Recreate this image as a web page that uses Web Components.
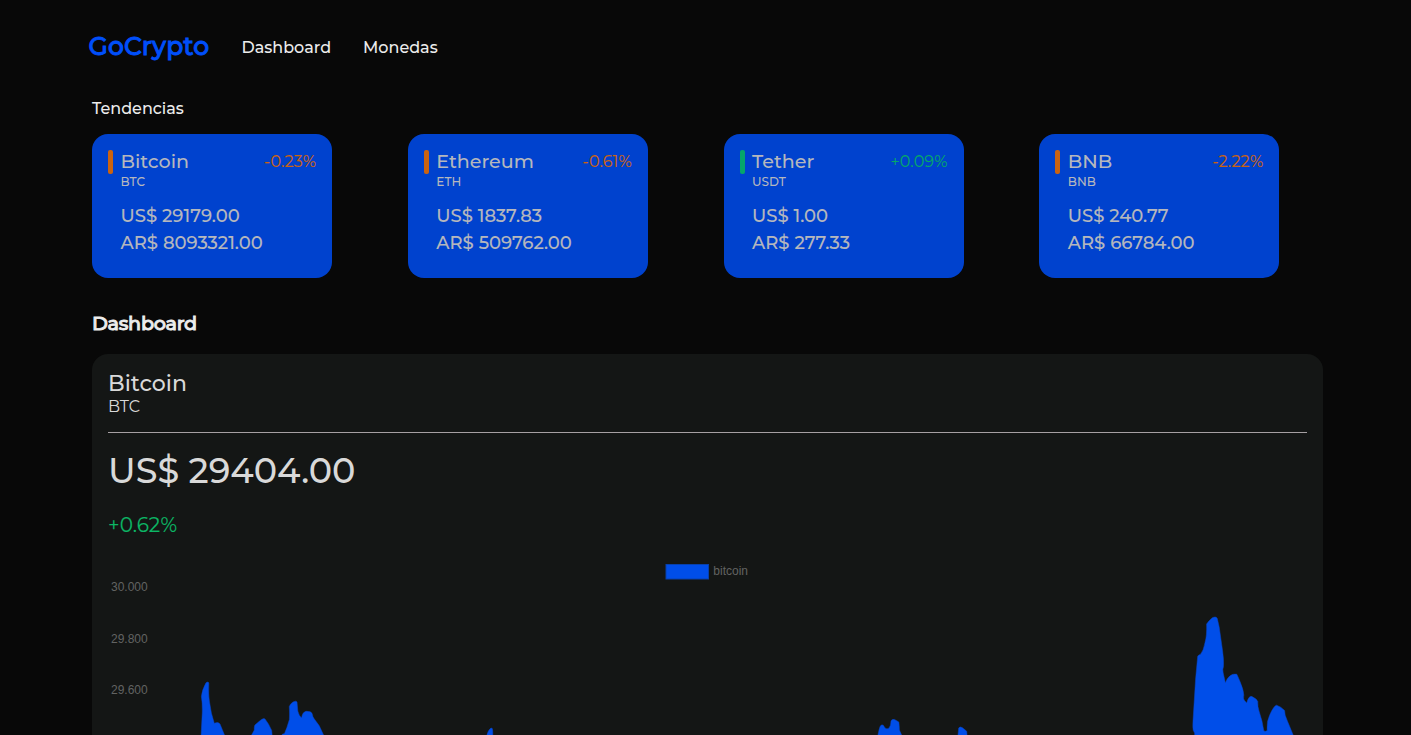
<!DOCTYPE html>
<html lang="es">
<head>
<meta charset="utf-8">
<title>GoCrypto</title>
<style>
html,body{margin:0;background:#080808;overflow:hidden;height:735px}
</style>
</head>
<body>
<go-app></go-app>
<script>
const define = (name, html, setup) => {
  const tpl = document.createElement('template');
  tpl.innerHTML = html;
  customElements.define(name, class extends HTMLElement {
    connectedCallback() {
      if (this.shadowRoot) return;
      this.attachShadow({ mode: 'open' }).append(tpl.content.cloneNode(true));
      if (setup) setup(this, this.shadowRoot);
    }
  });
};

define('text-line', `<style>:host{display:block;white-space:nowrap}</style><slot></slot>`);

define('go-nav', `<style>
:host{display:flex;align-items:center;gap:32px;height:94px;padding-left:88.6px;box-sizing:border-box}
text-line{font-size:16px;font-weight:500;line-height:20px;color:#ececec;margin-top:2px}
.logo{font-size:25px;line-height:32px;color:#004ffb;-webkit-text-stroke:.9px #004ffb;letter-spacing:.08px;margin:-3px .3px 0 0}
</style>
<text-line class="logo">GoCrypto</text-line>
<text-line>Dashboard</text-line>
<text-line>Monedas</text-line>`);

define('coin-card', `<style>
:host{display:flex;align-items:flex-start;box-sizing:border-box;width:240px;height:144px;padding:16px;border-radius:16px;background:#0042ce;color:#b5b7bd;--tone:#cb6310}
:host([up]){--tone:#05a66b}
.bar{width:5px;height:24px;border-radius:2px;background:var(--tone);margin-right:7.6px;flex:none}
.body{flex:1}
.top{display:flex;justify-content:space-between;height:22px}
.name{font-size:19.1px;font-weight:500;line-height:24px}
.pct{font-size:16px;line-height:24px;color:var(--tone);-webkit-text-stroke:.15px var(--tone);letter-spacing:.08px}
.sym{font-size:12px;font-weight:500;line-height:16px;margin:2px 0 13px}
.price{font-size:18px;font-weight:500;line-height:27px;-webkit-text-stroke:.1px #b5b7bd}
</style>
<div class="bar"></div><div class="body"></div>`, (host, root) => {
  const line = c => `<text-line class="${c === 'usd' || c === 'ars' ? 'price' : c}">${host.getAttribute(c)}</text-line>`;
  root.querySelector('.body').innerHTML =
    `<div class="top">${line('name')}${line('pct')}</div>` + line('sym') + line('usd') + line('ars');
});

define('price-chart', `<style>
:host{display:block;height:199px}
svg{display:block;width:1199px;height:199px}
text{font:12px "Liberation Sans",Arial,sans-serif;fill:#626362}
</style>
<svg viewBox="108 536 1199 199">
<rect x="666" y="564.5" width="42.5" height="14.5" fill="#004ee9" stroke="#0840ac"/>
<text x="713.3" y="575">bitcoin</text>
<text x="111" y="591">30.000</text><text x="111" y="643">29.800</text><text x="111" y="694">29.600</text>
<g fill="#004ee9" stroke="#0847cb" stroke-width=".5">
<path d="M201 737L202.3 712Q202.5 703 201.4 696.5Q202 690 206 682.8Q208.3 681 208.8 683Q208.3 695 209.5 702Q211 714 214.3 723.3Q218 721.5 220 724L225.3 737Z"/>
<path d="M250.5 737L254.3 730Q254 727 254.9 725L259 721.5Q263.5 717.5 265 719Q269 724 271.7 730.5L272.3 737Z"/>
<path d="M281 737L282.3 734.2L284.5 733.5Q287 728 289.4 719.5Q289.8 713 289.3 706.5Q290 704 293 702Q296.3 700.3 297 702L297.8 711Q299 716 301.6 717.8Q302.5 712 306 711.3Q311 711 312 713.3Q312.7 717 314.3 719L319.3 725.8L324.5 737Z"/>
<path d="M486.3 737Q488 730 491 728Q492.8 727.5 492.7 731L492.9 737Z"/>
<path d="M877.5 737L879 730Q880 725.5 881.5 724.9Q883.5 724.3 884.7 727.5Q886 729.3 888.5 728.5Q890.8 726.5 891 721Q891.5 719 894.5 719.4L898.8 722Q899.3 725 899.4 730L902.5 737Z"/>
<path d="M957.8 737L958.7 728Q960 726 962.5 727.8L966.7 731.2L967.2 737Z"/>
<path d="M1194.8 737L1194.6 733L1193.2 730.2Q1192.6 728 1193 721L1195.6 679L1197.7 656.3Q1198.7 654.6 1200.3 654.5Q1203.5 651 1205 642.5Q1207 636 1206.6 624Q1208 621.5 1212.3 617.8Q1216 616 1217.3 618.5L1219.2 627L1222.6 651Q1224 661 1223.4 667Q1222.4 669 1223.2 673L1225.4 682.8Q1229 673 1236.8 674.2Q1238.8 678.5 1240 681.5Q1243.6 690 1243.8 695Q1243 699 1244.5 700.5L1246.7 702.9Q1249 695 1252 696.6Q1256 698.3 1257.8 701.5Q1257.5 706.5 1259 711Q1262.5 721 1263.8 730.7Q1265.5 732 1267.2 730.5Q1266.5 721.5 1269.5 715.5Q1273.5 706 1276.5 705.2Q1281.5 706.8 1284.6 710.5Q1284.6 715.5 1287 720L1294 737Z"/>
</g></svg>`);

define('coin-panel', `<style>
:host{display:block;box-sizing:border-box;width:1231px;height:420px;padding:16px;border-radius:16px;background:#141615;color:#d9d9d9}
.name{font-size:22px;font-weight:500;line-height:26px;padding-top:1px}
.sym{font-size:16px;line-height:20px}
.rule{height:1px;background:#a6a0a3;margin:15px 0 16px}
.price{font-size:35px;font-weight:500;line-height:44px}
.pct{font-size:20px;line-height:24px;margin-top:20px;margin-bottom:-1px;color:#0cb765;-webkit-text-stroke:.15px #0cb765}
</style>
<text-line class="name">Bitcoin</text-line>
<text-line class="sym">BTC</text-line>
<div class="rule"></div>
<text-line class="price">US$ 29404.00</text-line>
<text-line class="pct">+0.62%</text-line>
<price-chart></price-chart>`);

define('go-app', `<style>
:host{display:block;height:735px;overflow:hidden;font-family:Montserrat,Inter,sans-serif;color:#ececec}
main{padding:5px 0 0 92px}
.trend{font-size:16px;font-weight:500;line-height:20px;margin-bottom:15px}
.cards{display:grid;grid-template-columns:repeat(4,240px);column-gap:75.75px}
.title{font-size:19.2px;font-weight:500;letter-spacing:-.28px;-webkit-text-stroke:.9px #ececec;line-height:24px;margin:33px 0 19px}
</style>
<go-nav></go-nav>
<main>
<text-line class="trend">Tendencias</text-line>
<div class="cards">
<coin-card name="Bitcoin" pct="-0.23%" sym="BTC" usd="US$ 29179.00" ars="AR$ 8093321.00"></coin-card>
<coin-card name="Ethereum" pct="-0.61%" sym="ETH" usd="US$ 1837.83" ars="AR$ 509762.00"></coin-card>
<coin-card up name="Tether" pct="+0.09%" sym="USDT" usd="US$ 1.00" ars="AR$ 277.33"></coin-card>
<coin-card name="BNB" pct="-2.22%" sym="BNB" usd="US$ 240.77" ars="AR$ 66784.00"></coin-card>
</div>
<text-line class="title">Dashboard</text-line>
<coin-panel></coin-panel>
</main>`);
</script>
</body>
</html>
